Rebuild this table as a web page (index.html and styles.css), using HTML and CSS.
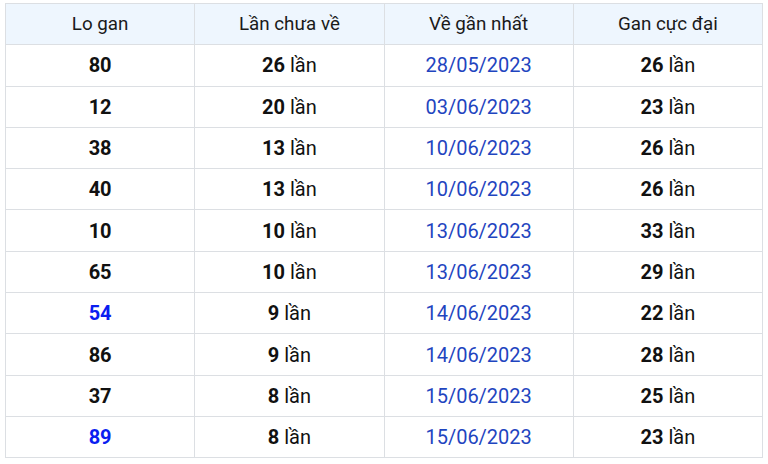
FILE: index.html
```html
<!DOCTYPE html>
<html lang="vi">
<head>
<meta charset="utf-8">
<link rel="stylesheet" href="styles.css">
</head>
<body>
<table class="gan-table">
<thead>
<tr><th>Lo gan</th><th>Lần chưa về</th><th>Về gần nhất</th><th>Gan cực đại</th></tr>
</thead>
<tbody>
<tr><td class="num">80</td><td><b>26</b> lần</td><td class="date">28/05/2023</td><td><b>26</b> lần</td></tr>
<tr><td class="num">12</td><td><b>20</b> lần</td><td class="date">03/06/2023</td><td><b>23</b> lần</td></tr>
<tr><td class="num">38</td><td><b>13</b> lần</td><td class="date">10/06/2023</td><td><b>26</b> lần</td></tr>
<tr><td class="num">40</td><td><b>13</b> lần</td><td class="date">10/06/2023</td><td><b>26</b> lần</td></tr>
<tr><td class="num">10</td><td><b>10</b> lần</td><td class="date">13/06/2023</td><td><b>33</b> lần</td></tr>
<tr><td class="num">65</td><td><b>10</b> lần</td><td class="date">13/06/2023</td><td><b>29</b> lần</td></tr>
<tr><td class="num hot">54</td><td><b>9</b> lần</td><td class="date">14/06/2023</td><td><b>22</b> lần</td></tr>
<tr><td class="num">86</td><td><b>9</b> lần</td><td class="date">14/06/2023</td><td><b>28</b> lần</td></tr>
<tr><td class="num">37</td><td><b>8</b> lần</td><td class="date">15/06/2023</td><td><b>25</b> lần</td></tr>
<tr><td class="num hot">89</td><td><b>8</b> lần</td><td class="date">15/06/2023</td><td><b>23</b> lần</td></tr>
</tbody>
</table>
</body>
</html>
```
FILE: styles.css
```css
html, body {
  margin: 0;
  padding: 0;
  background: #ffffff;
}
body {
  padding: 3px 5px 0 5px;
  font-family: Roboto, "Liberation Sans", Arial, sans-serif;
  font-size: 20px;
  color: #111111;
}
.gan-table {
  width: 758px;
  border-collapse: collapse;
  table-layout: fixed;
}
.gan-table th,
.gan-table td {
  border: 1px solid #dcdfe3;
  text-align: center;
  vertical-align: middle;
  height: 40.3px;
  padding: 0;
  line-height: 22px;
}
.gan-table th {
  background: #eef6fe;
  font-weight: 400;
  font-size: 18.8px;
  color: #1a1a1a;
}
.gan-table b {
  font-weight: 700;
}
.num {
  font-weight: 700;
}
.num.hot {
  color: #0b1ef0;
}
.date {
  color: #1f45bf;
}
```
